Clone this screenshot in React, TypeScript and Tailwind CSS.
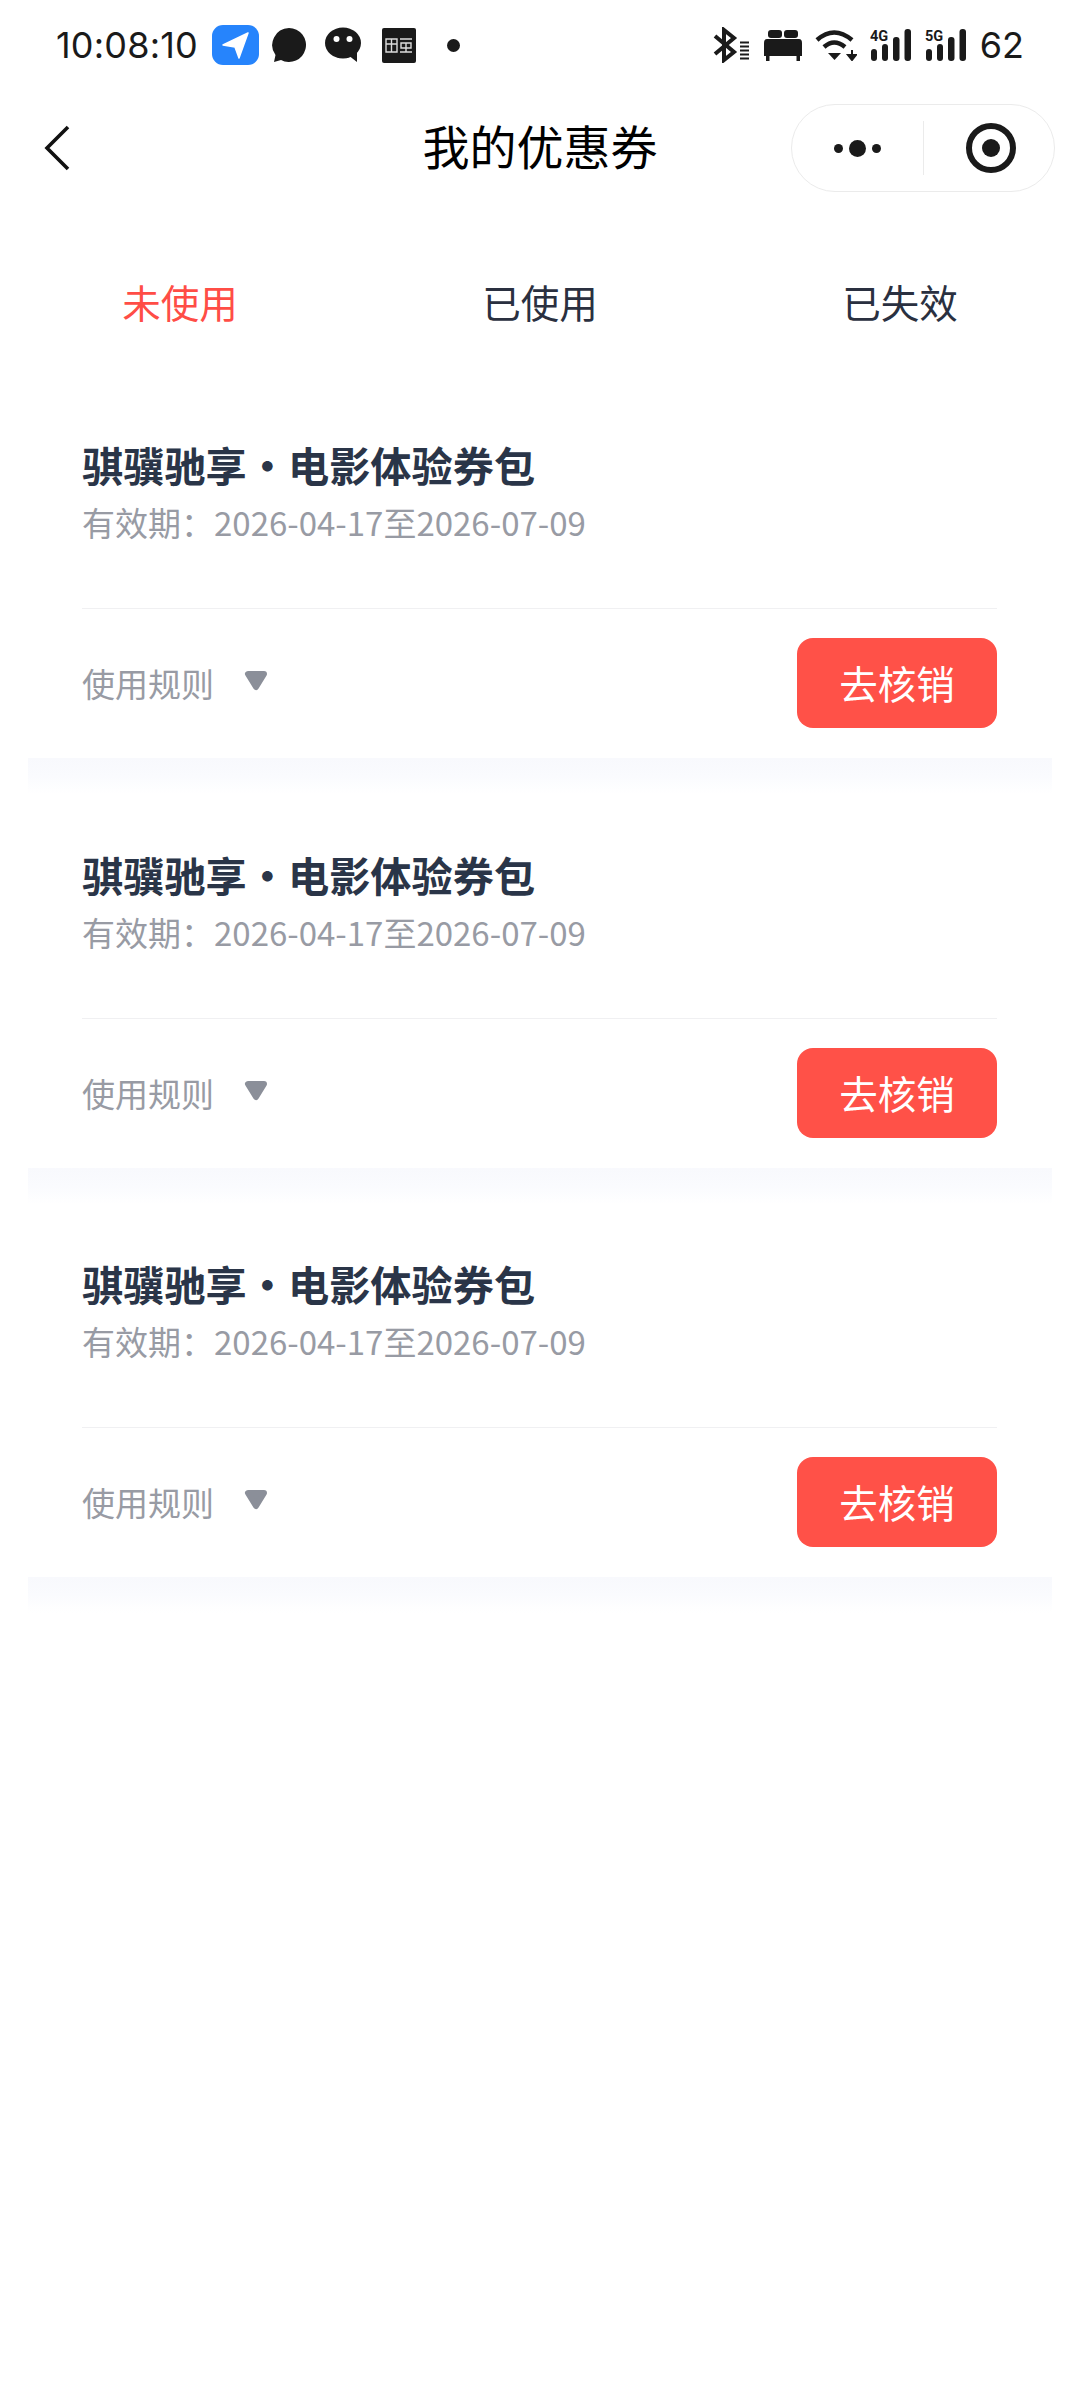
const cjk = "font-['Noto_Sans_CJK_SC','Noto_Sans',sans-serif]";

function SignalIcon({ label }: { label: string }) {
    return (
        <svg width="43" height="34" viewBox="0 0 43 34" className="shrink-0">
            <text x="0" y="13" fontSize="14.5" fontWeight="700" fontFamily="Roboto, sans-serif" fill="#1a1a1a">
                {label}
            </text>
            <rect x="1" y="21" width="6" height="12" rx="3" fill="#1a1a1a" />
            <rect x="12" y="16" width="6" height="17" rx="3" fill="#1a1a1a" />
            <rect x="23" y="9" width="6.5" height="24" rx="3" fill="#1a1a1a" />
            <rect x="34.5" y="1" width="6.5" height="32" rx="3" fill="#1a1a1a" />
        </svg>
    );
}

function StatusBar() {
    return (
        <div className="h-[60px] mt-[15px] pl-[56px] pr-[56px] flex items-center justify-between">
            <div className="flex items-center">
                <span className="font-['Inter',sans-serif] text-[36px] tracking-[0.2px] text-[#1a1a1a] w-[156px]">10:08:10</span>
                <div className="w-[47px] h-[40px] rounded-[11px] bg-[#2684fc] flex items-center justify-center">
                    <svg width="30" height="30" viewBox="0 0 30 30">
                        <path d="M27 3 L2 15 L14 17 L18 28 Z" fill="#fff" stroke="#fff" strokeWidth="1.5" strokeLinejoin="round" />
                    </svg>
                </div>
                <svg width="36" height="36" viewBox="0 0 36 36" className="ml-[12px]">
                    <path d="M18 1 A17 17 0 1 1 10 33 L3 35 L4.5 28 A17 17 0 0 1 18 1 Z" fill="#1a1a1a" />
                </svg>
                <svg width="38" height="36" viewBox="0 0 38 36" className="ml-[17px]">
                    <ellipse cx="19" cy="16" rx="18" ry="15.5" fill="#1a1a1a" />
                    <path d="M24 28 L33 35 L33 25 Z" fill="#1a1a1a" />
                    <circle cx="12.5" cy="12" r="3" fill="#fff" />
                    <circle cx="25.5" cy="12" r="3" fill="#fff" />
                </svg>
                <div className="ml-[20px] w-[34px] h-[35px] rounded-[2px] bg-[#1a1a1a] flex items-center justify-center gap-[1px]">
                    <svg width="28" height="15" viewBox="0 0 28 15" fill="none" stroke="#ddd" strokeWidth="1.4">
                        <path d="M1 1 H12 V14 H1 Z M1 6 H12 M6.5 1 V14 M15 1 H27 M16 5 H26 V10 H16 Z M21 5 V14 M15 14 H27" />
                    </svg>
                </div>
                <div className="ml-[31px] w-[13px] h-[13px] rounded-full bg-[#1a1a1a]" />
            </div>
            <div className="flex items-center">
                <svg width="38" height="36" viewBox="0 0 38 36" fill="none" className="mr-[12px]">
                    <path d="M2 9 L21 25 L11 33 V3 L21 11 L2 27" stroke="#1a1a1a" strokeWidth="4" />
                    <path d="M27 15.5 H36 M27 19.5 H36 M27 23.5 H36 M27 27.5 H36 M27 31.5 H36" stroke="#1a1a1a" strokeWidth="2" />
                </svg>
                <svg width="40" height="32" viewBox="0 0 40 32" className="mr-[12px]">
                    <rect x="5" y="1" width="14" height="8" rx="3" fill="#1a1a1a" />
                    <rect x="21" y="1" width="14" height="8" rx="3" fill="#1a1a1a" />
                    <path d="M4 10 H36 Q39 10 39 14 V27 H1 V14 Q1 10 4 10 Z" fill="#1a1a1a" />
                    <rect x="3" y="26" width="3.5" height="6" fill="#1a1a1a" />
                    <rect x="33.5" y="26" width="3.5" height="6" fill="#1a1a1a" />
                </svg>
                <svg width="42" height="32" viewBox="0 0 42 32" fill="none" className="mr-[13px]">
                    <path d="M2 11 Q19 -4 37 11" stroke="#1a1a1a" strokeWidth="4.5" />
                    <path d="M9 18 Q19 9 30 18" stroke="#1a1a1a" strokeWidth="4.5" />
                    <path d="M13 24 H26 L19.5 31 Z" fill="#1a1a1a" />
                    <path d="M37 21 V27 M33 26 H41 L37 31 Z" fill="#1a1a1a" stroke="#1a1a1a" strokeWidth="2" />
                </svg>
                <SignalIcon label="4G" />
                <div className="w-[12px]" />
                <SignalIcon label="5G" />
                <span className="font-['Inter',sans-serif] text-[36px] text-[#1a1a1a] ml-[12px]">62</span>
            </div>
        </div>
    );
}

function NavBar() {
    return (
        <div className="relative h-[88px] mt-[29px] flex items-center justify-center">
            <svg width="30" height="48" viewBox="0 0 30 48" fill="none" className="absolute left-[43px] top-[20px]">
                <path d="M25 3 L4 24 L25 45" stroke="#111" strokeWidth="3.6" />
            </svg>
            <h1 className={`${cjk} text-[47px] font-normal text-black -mt-[5px]`}>我的优惠券</h1>
            <div className="absolute right-[25px] top-0 w-[264px] h-[88px] rounded-full border border-[#ebebeb] bg-white flex items-center">
                <div className="w-[131px] flex items-center justify-center gap-[6px]">
                    <span className="w-[9px] h-[9px] rounded-full bg-[#1a1a1a]" />
                    <span className="w-[17px] h-[17px] rounded-full bg-[#1a1a1a]" />
                    <span className="w-[9px] h-[9px] rounded-full bg-[#1a1a1a]" />
                </div>
                <div className="w-px h-[54px] bg-[#ebebeb]" />
                <div className="flex-1 flex items-center justify-center pl-[3px]">
                    <div className="w-[50px] h-[50px] rounded-full border-[6px] border-[#1a1a1a] flex items-center justify-center">
                        <div className="w-[18px] h-[18px] rounded-full bg-[#1a1a1a]" />
                    </div>
                </div>
            </div>
        </div>
    );
}

function Tabs() {
    const tabs = ["未使用", "已使用", "已失效"];
    return (
        <div className={`${cjk} grid grid-cols-3 h-[58px] mt-[80px] text-[38.5px] leading-[58px] text-center text-[#2a3040]`}>
            {tabs.map((t, i) => (
                <span key={t} className={i === 0 ? "text-[#ff4d46]" : ""}>{t}</span>
            ))}
        </div>
    );
}

function CouponCard() {
    return (
        <div className={`${cjk} h-[409.6px]`}>
            <div className="pl-[82px] pr-[83px]">
                <div className="text-[41.2px] leading-[56px] font-bold text-[#2a3548]">骐骥驰享・电影体验券包</div>
                <div className="text-[33px] leading-[52px] mt-[4px] text-[#989ba4]">有效期：2026-04-17至2026-07-09</div>
                <div className="h-px bg-[#f0f0f2] mt-[60px]" />
                <div className="flex items-center justify-between pt-[29px]">
                    <div className="flex items-center">
                        <span className="text-[33px] leading-[90px] text-[#989ba4]">使用规则</span>
                        <svg width="26" height="22" viewBox="0 0 26 22" className="ml-[29px] -mt-[4px]">
                            <path d="M5 4 H21 L13 17 Z" fill="#8b8f99" stroke="#8b8f99" strokeWidth="6" strokeLinejoin="round" />
                        </svg>
                    </div>
                    <button className="w-[200px] h-[90px] rounded-[16px] bg-[#ff5148] text-white text-[38.5px]">去核销</button>
                </div>
            </div>
            <div className="mx-[28px] mt-[30px] h-[36px] bg-linear-to-b from-[#f8f9fd] via-[#fafbfe] to-white" />
        </div>
    );
}

export default function App() {
    return (
        <div className="w-[1080px] h-[2400px] bg-white overflow-hidden">
            <StatusBar />
            <NavBar />
            <Tabs />
            <div className="mt-[106px]">
                <CouponCard />
                <CouponCard />
                <CouponCard />
            </div>
        </div>
    );
}
